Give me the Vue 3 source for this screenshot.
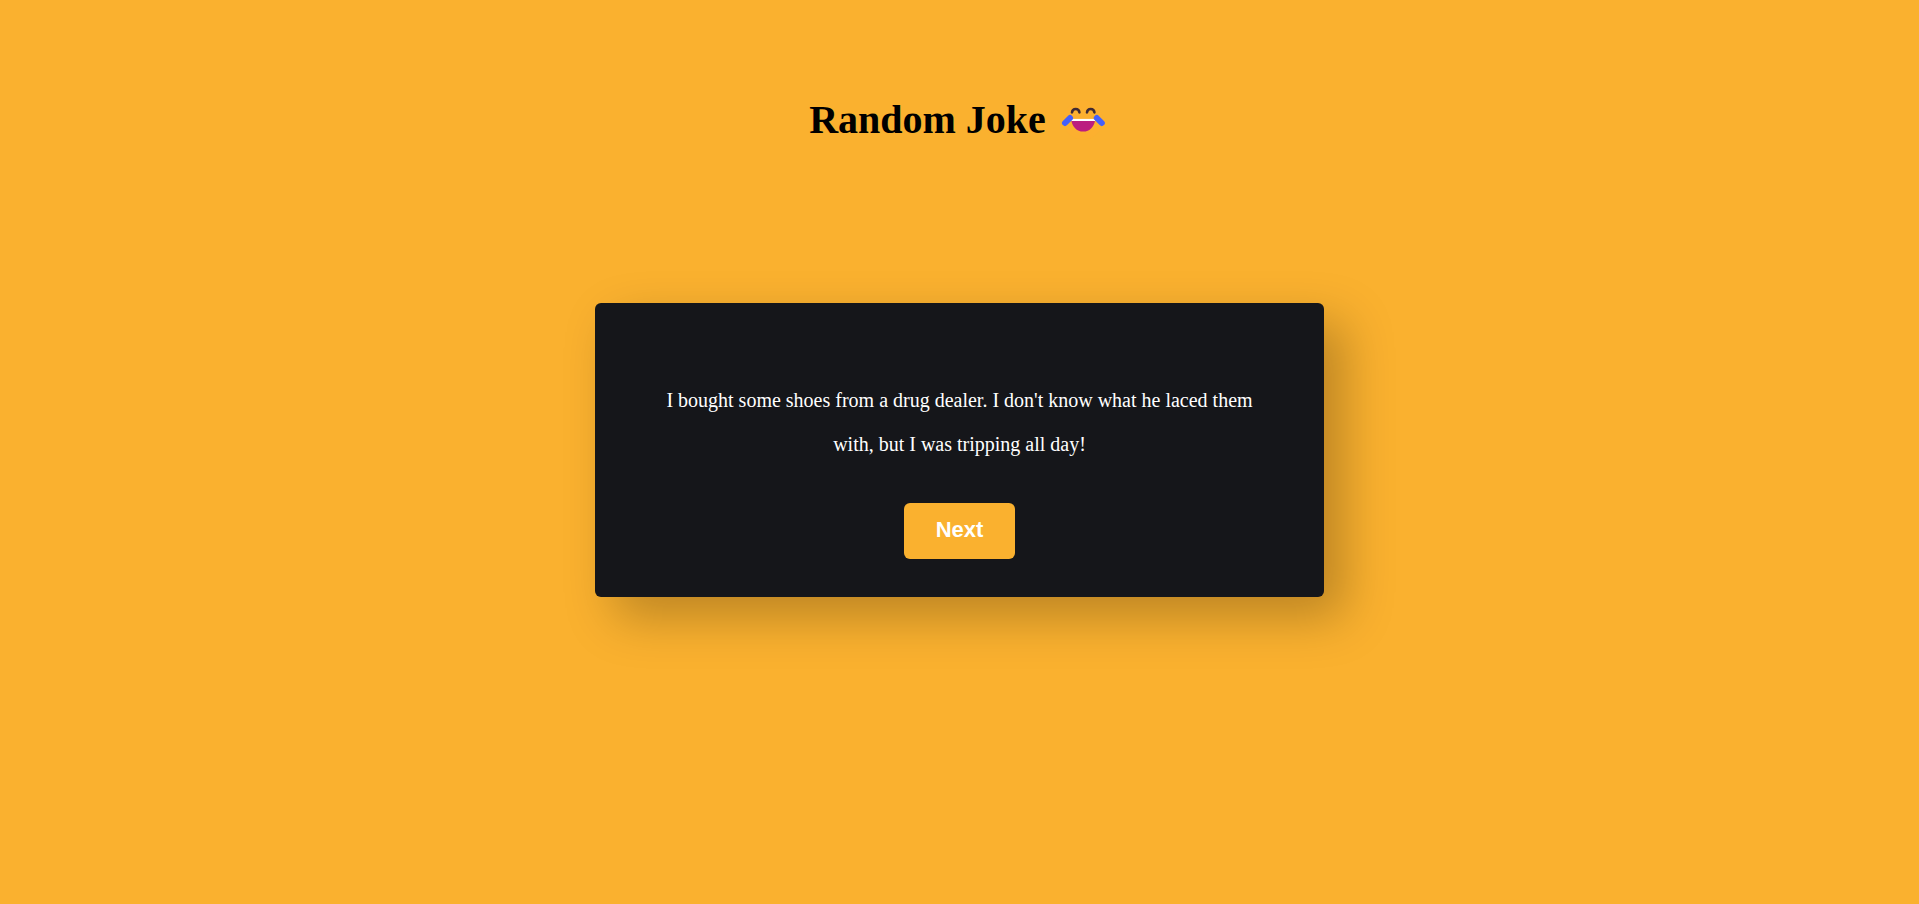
<script setup>
import { ref } from 'vue'

const jokes = [
  "I bought some shoes from a drug dealer. I don't know what he laced them with, but I was tripping all day!",
]
const index = ref(0)

function next() {
  index.value = (index.value + 1) % jokes.length
}
</script>

<template>
  <main class="page">
    <h1 class="title">
      Random Joke
      <svg class="emoji" viewBox="0 0 54 44" role="img" aria-label="Face with tears of joy">
        <circle cx="27" cy="22" r="19.5" fill="#fcb02f" />
        <path d="M16 14.4 c.5-4.6 6.9-4.6 7.4 0 M31 14.4 c.5-4.6 6.9-4.6 7.4 0" fill="none" stroke="#402a32" stroke-width="2.6" stroke-linecap="round" />
        <path d="M15.4 20.9 h23.6 a11.8 12.7 0 0 1 -23.6 0 z" fill="#bb1d80" />
        <path d="M15.4 20.9 h23.6 v2.1 h-23.6 z" fill="#fff" />
        <path d="M9 25 L14 20 M40.8 20 L45.8 25" fill="none" stroke="#4460fb" stroke-width="6" stroke-linecap="round" />
      </svg>
    </h1>
    <section class="card">
      <p class="joke">{{ jokes[index] }}</p>
      <button class="next" type="button" @click="next">Next</button>
    </section>
  </main>
</template>

<style>
body {
  background: #fab12f;
}
</style>

<style scoped>
.page {
  box-sizing: border-box;
  min-height: 100vh;
  padding: 96px 0;
  display: flex;
  flex-direction: column;
  align-items: center;
  gap: 159px;
  font-family: "Liberation Serif", "Times New Roman", serif;
}

.title {
  display: flex;
  align-items: center;
  gap: 10px;
  margin: 0;
  color: #000;
  font-size: 40px;
  line-height: 48px;
}

.emoji {
  width: 54px;
  height: 44px;
}

.card {
  box-sizing: border-box;
  width: 38%;
  min-width: 320px;
  padding: 75px 64px 38px;
  display: flex;
  flex-direction: column;
  align-items: center;
  gap: 37px;
  border-radius: 6px;
  background: #15161a;
  box-shadow: 20px 20px 50px rgba(0, 0, 0, 0.25);
}

.joke {
  margin: 0;
  color: #fff;
  font-size: 20px;
  line-height: 44px;
  text-align: center;
}

.next {
  padding: 14px 32px 16px;
  border: 0;
  border-radius: 6px;
  background: #fab12f;
  color: #fff;
  font-family: "Liberation Sans", Arial, sans-serif;
  font-size: 22px;
  font-weight: 700;
  line-height: 26px;
  cursor: pointer;
}
</style>
